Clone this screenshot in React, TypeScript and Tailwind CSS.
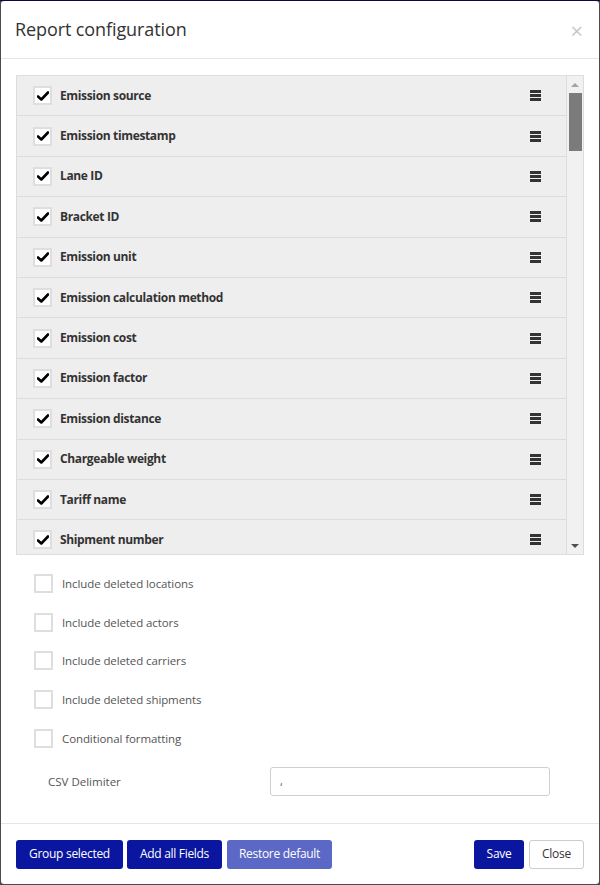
import React from "react";

const fields = [
  "Emission source",
  "Emission timestamp",
  "Lane ID",
  "Bracket ID",
  "Emission unit",
  "Emission calculation method",
  "Emission cost",
  "Emission factor",
  "Emission distance",
  "Chargeable weight",
  "Tariff name",
  "Shipment number",
];

const options = [
  "Include deleted locations",
  "Include deleted actors",
  "Include deleted carriers",
  "Include deleted shipments",
  "Conditional formatting",
];

function Check() {
  return (
    <svg width="12" height="10" viewBox="0 0 12 10">
      <path d="M1 5.5 L4.3 8.5 L11 1.5" fill="none" stroke="#000" strokeWidth="2.6" strokeLinecap="round" strokeLinejoin="round" />
    </svg>
  );
}

function Burger() {
  return (
    <div className="flex flex-col gap-[1px] w-[11px]">
      <div className="h-[3px] bg-[#333]" />
      <div className="h-[3px] bg-[#333]" />
      <div className="h-[3px] bg-[#333]" />
    </div>
  );
}

export default function App() {
  return (
    <div
      className="w-[600px] h-[885px] bg-[#4a4a4a] border-t border-t-[#0a0a40] p-px pt-0"
      style={{ fontFamily: '"Open Sans", "Noto Sans", sans-serif' }}
    >
      <div className="w-full h-full bg-white rounded-[3px] flex flex-col">
        <div className="h-[58px] flex items-center justify-between pl-[14px] pr-[16px] border-b border-[#e5e5e5] shrink-0">
          <div className="text-[18px] text-[#333] tracking-[-0.1px]">Report configuration</div>
          <div className="text-[22px] text-[#c8c8c8] leading-none">×</div>
        </div>
        <div className="flex-1 px-[15px] pt-[16px]">
          <div className="h-[480px] border border-[#dddddd] flex">
            <div className="flex-1 overflow-hidden bg-[#eeeeee]">
              {fields.map((f) => (
                <div key={f} className="h-[40.4px] flex items-center border-b border-[#dddddd] pl-[16px] pr-[25px]">
                  <div className="w-[19px] h-[19px] bg-white border-2 border-[#dedede] flex items-center justify-center">
                    <Check />
                  </div>
                  <div className="ml-[8px] flex-1 text-[12px] font-bold text-[#333] tracking-[-0.35px]">{f}</div>
                  <Burger />
                </div>
              ))}
            </div>
            <div className="w-[17px] bg-[#f1f1f1] border-l border-[#dddddd] flex flex-col items-center">
              <div className="h-[17px] flex items-center justify-center">
                <div className="w-0 h-0 border-l-[4px] border-r-[4px] border-b-[4px] border-l-transparent border-r-transparent border-b-[#a3a3a3]" />
              </div>
              <div className="w-[13px] h-[58px] bg-[#7b7b7b]" />
              <div className="flex-1" />
              <div className="h-[17px] flex items-center justify-center">
                <div className="w-0 h-0 border-l-[4px] border-r-[4px] border-t-[4px] border-l-transparent border-r-transparent border-t-[#505050]" />
              </div>
            </div>
          </div>
          <div className="pt-[9px] pl-[18px] flex flex-col">
            {options.map((o) => (
              <div key={o} className="h-[38.8px] flex items-center">
                <div className="w-[19px] h-[19px] border-2 border-[#dedede] bg-white" />
                <div className="ml-[9px] text-[11.5px] text-[#555] tracking-[-0.1px]">{o}</div>
              </div>
            ))}
          </div>
          <div className="flex items-center mt-[9px] pl-[32px]">
            <div className="w-[222px] text-[11.5px] text-[#555]">CSV Delimiter</div>
            <div className="w-[280px] h-[29px] border border-[#d0d0d0] rounded-[3px] flex items-center px-[9px] text-[11px] text-[#555]">,</div>
          </div>
        </div>
        <div className="h-[61px] border-t border-[#e5e5e5] flex items-center px-[15px] shrink-0">
          <div className="flex gap-[4px]">
            <div className="h-[29px] w-[107px] justify-center bg-[#0a16a0] text-white text-[12px] tracking-[-0.3px] rounded-[3px] flex items-center">Group selected</div>
            <div className="h-[29px] w-[95px] justify-center bg-[#0a16a0] text-white text-[12px] tracking-[-0.3px] rounded-[3px] flex items-center">Add all Fields</div>
            <div className="h-[29px] w-[105px] justify-center bg-[#5c68c5] text-white text-[12px] tracking-[-0.3px] rounded-[3px] flex items-center ml-[1px]">Restore default</div>
          </div>
          <div className="flex-1" />
          <div className="flex gap-[5px]">
            <div className="h-[29px] w-[50px] justify-center bg-[#0a16a0] text-white text-[12px] tracking-[-0.3px] rounded-[3px] flex items-center">Save</div>
            <div className="h-[29px] w-[55px] justify-center bg-white border border-[#cccccc] text-[#333] text-[12px] tracking-[-0.3px] rounded-[3px] flex items-center">Close</div>
          </div>
        </div>
      </div>
    </div>
  );
}
